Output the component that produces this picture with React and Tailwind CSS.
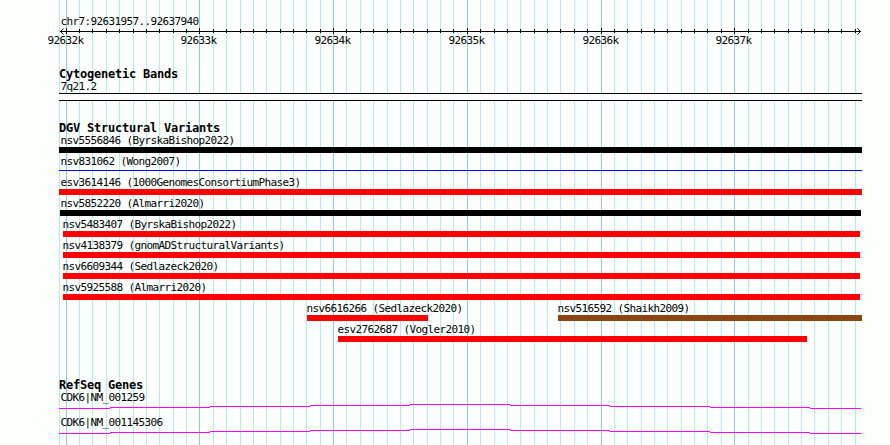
import React from "react";

// Pixel columns of the genome grid
const majorLines = [66, 199, 333, 467, 601, 734];
const minorLines = [
  59, 79, 92, 106, 119, 133, 146, 159, 173, 186,
  213, 226, 240, 253, 266, 280, 293, 306, 320,
  346, 360, 373, 387, 400, 413, 427, 440, 453,
  480, 494, 507, 520, 534, 547, 560, 574, 587,
  614, 627, 641, 654, 667, 681, 694, 707, 721,
  748, 761, 774, 788, 801, 814, 828, 841, 855,
];

// Each row holds one or more variants; gap is the space left of the variant
const variantRows = [
  [{ name: "nsv5556846 (ByrskaBishop2022)", gap: 59, width: 803, bar: "h-1.5 bg-black" }],
  [{ name: "nsv831062 (Wong2007)", gap: 59, width: 803, bar: "mt-0.5 h-px bg-[#0000ff]" }],
  [{ name: "esv3614146 (1000GenomesConsortiumPhase3)", gap: 59, width: 803, bar: "h-1.5 bg-[#ff0000]" }],
  [{ name: "nsv5852220 (Almarri2020)", gap: 60, width: 801, bar: "h-1.5 bg-black", shift: "-ml-px" }],
  [{ name: "nsv5483407 (ByrskaBishop2022)", gap: 63, width: 797, bar: "h-1.5 bg-[#ff0000]", shift: "-ml-0.5" }],
  [{ name: "nsv4138379 (gnomADStructuralVariants)", gap: 63, width: 797, bar: "h-1.5 bg-[#ff0000]", shift: "-ml-0.5" }],
  [{ name: "nsv6609344 (Sedlazeck2020)", gap: 63, width: 797, bar: "h-1.5 bg-[#ff0000]", shift: "-ml-0.5" }],
  [{ name: "nsv5925588 (Almarri2020)", gap: 63, width: 797, bar: "h-1.5 bg-[#ff0000]", shift: "-ml-0.5" }],
  [
    { name: "nsv6616266 (Sedlazeck2020)", gap: 307, width: 121, bar: "h-1.5 bg-[#ff0000]", shift: "-ml-0.5" },
    { name: "nsv516592 (Shaikh2009)", gap: 130, width: 304, bar: "h-1.5 bg-[#8b4513]", shift: "-ml-0.5" },
  ],
  [{ name: "esv2762687 (Vogler2010)", gap: 338, width: 469, bar: "h-1.5 bg-[#ff0000]", shift: "-ml-0.5" }],
];

const genes = ["CDK6|NM_001259", "CDK6|NM_001145306"];

const Grid = () => (
  <svg className="absolute inset-0" width="890" height="445" shapeRendering="crispEdges">
    {minorLines.map((x) => (
      <rect key={x} x={x} y="0" width="1" height="445" fill="#afeeee" />
    ))}
    {majorLines.map((x) => (
      <rect key={x} x={x} y="0" width="1" height="445" fill="#87ceeb" />
    ))}
  </svg>
);

const Ruler = () => (
  <svg className="block" width="890" height="20">
    <g shapeRendering="crispEdges">
      <rect x="60" y="3" width="801" height="1" />
      {minorLines.slice(1).map((x) => (
        <rect key={x} x={x} y="1" width="1" height="4" />
      ))}
      {majorLines.map((x) => (
        <rect key={x} x={x} y="0" width="1" height="6" />
      ))}
    </g>
    <path d="M63.5 0.5L60.5 3.5L63.5 6.5M857.5 0.5L860.5 3.5L857.5 6.5" fill="none" stroke="black" />
    {majorLines.map((x, i) => (
      <text key={x} x={x - 18.5} y="16">{`9263${i + 2}k`}</text>
    ))}
  </svg>
);

const Label = ({ children, shift = "" }) => (
  <div className={`h-[15px] pl-[1.5px] leading-[17px] whitespace-pre ${shift}`}>{children}</div>
);

const Heading = ({ children }) => (
  <h2 className="h-3 pl-[59px] text-[12px] leading-[17px] font-bold tracking-[-0.225px]">{children}</h2>
);

const App = () => {
  return (
    <div
      className="relative h-[445px] w-[890px] overflow-hidden bg-[#fdfffc] text-[11px] tracking-[-0.622px] text-black"
      style={{ fontFamily: '"DejaVu Sans Mono", "Liberation Mono", monospace' }}
    >
      <Grid />
      <div className="relative flex flex-col pt-[13px]">
        <div className="pl-[59px]">
          <Label>chr7:92631957..92637940</Label>
        </div>
        <Ruler />

        {/* Cytogenetic band */}
        <section className="mt-[18px]">
          <Heading>Cytogenetic Bands</Heading>
          <div className="ml-[59px] w-[803px]">
            <Label>7q21.2</Label>
            <div className="h-2 border-y border-black bg-[#fdfffc]"></div>
          </div>
        </section>

        {/* Structural variants */}
        <section className="mt-[19px]">
          <Heading>DGV Structural Variants</Heading>
          {variantRows.map((row, i) => (
            <div key={i} className="flex h-[21px]">
              {row.map((v) => (
                <div key={v.name} className="shrink-0" style={{ marginLeft: v.gap, width: v.width }}>
                  <Label shift={v.shift}>{v.name}</Label>
                  <div className={v.bar}></div>
                </div>
              ))}
            </div>
          ))}
        </section>

        {/* Genes, drawn as a stepped intron line */}
        <section className="mt-[35px]">
          <Heading>RefSeq Genes</Heading>
          {genes.map((gene) => (
            <div key={gene} className="h-[25px] pl-[59px]">
              <Label>{gene}</Label>
              <svg className="block" width="802" height="5" fill="#ff00ff" shapeRendering="crispEdges">
                <rect x="0" y="4" width="51" height="1" />
                <rect x="51" y="3" width="100" height="1" />
                <rect x="151" y="2" width="100" height="1" />
                <rect x="251" y="1" width="100" height="1" />
                <rect x="351" y="0" width="100" height="1" />
                <rect x="451" y="1" width="100" height="1" />
                <rect x="551" y="2" width="100" height="1" />
                <rect x="651" y="3" width="100" height="1" />
                <rect x="751" y="4" width="51" height="1" />
              </svg>
            </div>
          ))}
        </section>
      </div>
    </div>
  );
};

export default App;
